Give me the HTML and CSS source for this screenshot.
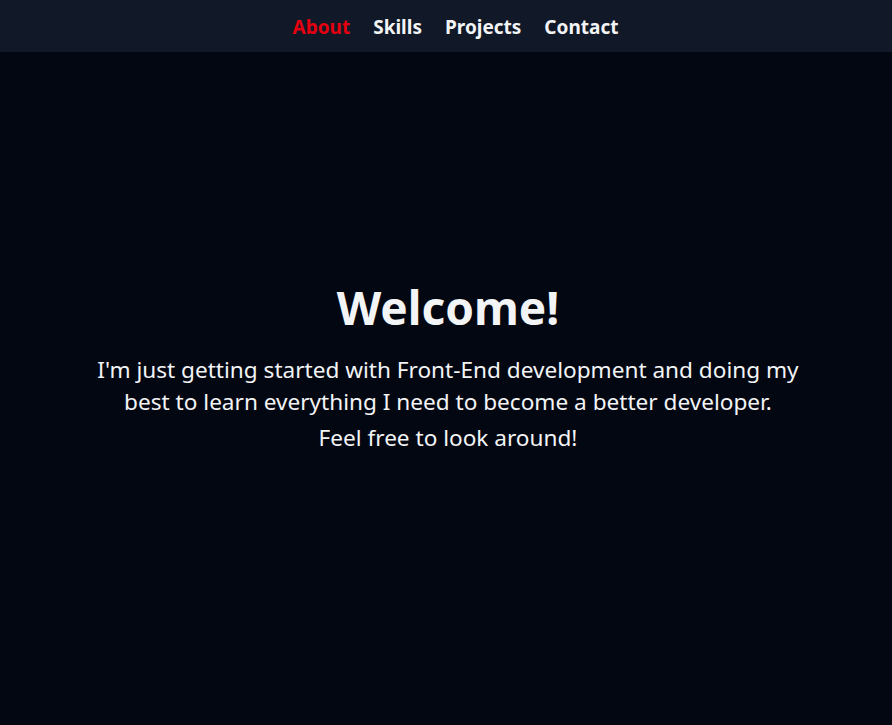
FILE: index.html
```html
<!DOCTYPE html>
<html lang="en">
<head>
<meta charset="utf-8">
<title>Welcome</title>
<link rel="stylesheet" href="styles.css">
</head>
<body>
<header class="topbar">
  <nav class="nav">
    <a class="nav-link active" href="#about">About</a>
    <a class="nav-link" href="#skills">Skills</a>
    <a class="nav-link" href="#projects">Projects</a>
    <a class="nav-link" href="#contact">Contact</a>
  </nav>
</header>
<main class="hero" id="about">
  <h1 class="hero-title">Welcome!</h1>
  <p class="hero-text">I'm just getting started with Front-End development and doing my best to learn everything I need to become a better developer.</p>
  <p class="hero-text hero-sub">Feel free to look around!</p>
</main>
</body>
</html>
```
FILE: styles.css
```css
* { box-sizing: border-box; }
html, body { margin: 0; padding: 0; }
body {
  background: #030712;
  color: #f3f4f6;
  font-family: "Noto Sans", "Open Sans", sans-serif;
  min-height: 100vh;
}
.topbar {
  background: #111827;
  height: 52px;
  display: flex;
  align-items: center;
  justify-content: center;
}
.nav {
  display: flex;
  gap: 23px;
  padding-left: 19px;
  padding-top: 2px;
}
.nav-link {
  color: #f3f4f6;
  text-decoration: none;
  font-weight: 700;
  font-size: 19px;
  line-height: 24px;
}
.nav-link.active { color: #e3000f; }
.hero {
  height: calc(100vh - 52px);
  display: flex;
  flex-direction: column;
  align-items: center;
  justify-content: center;
  text-align: center;
  padding: 0 14px 45px 18px;
}
.hero-title {
  margin: 0 0 19px;
  font-size: 46px;
  line-height: 56px;
  font-weight: 700;
}
.hero-text {
  margin: 0;
  max-width: 730px;
  font-size: 22.6px;
  line-height: 32px;
}
.hero-sub { margin-top: 4px; }
```
